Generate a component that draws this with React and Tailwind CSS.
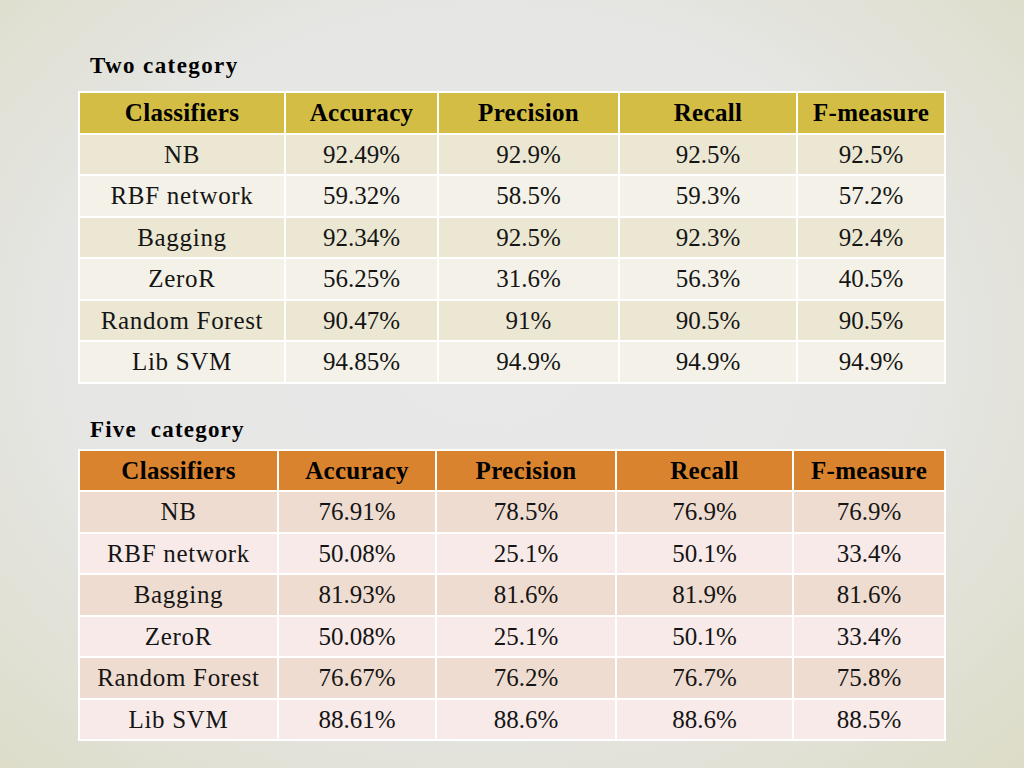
import React from "react";

const two = [
  ["NB", "92.49%", "92.9%", "92.5%", "92.5%"],
  ["RBF network", "59.32%", "58.5%", "59.3%", "57.2%"],
  ["Bagging", "92.34%", "92.5%", "92.3%", "92.4%"],
  ["ZeroR", "56.25%", "31.6%", "56.3%", "40.5%"],
  ["Random Forest", "90.47%", "91%", "90.5%", "90.5%"],
  ["Lib SVM", "94.85%", "94.9%", "94.9%", "94.9%"],
];

const five = [
  ["NB", "76.91%", "78.5%", "76.9%", "76.9%"],
  ["RBF network", "50.08%", "25.1%", "50.1%", "33.4%"],
  ["Bagging", "81.93%", "81.6%", "81.9%", "81.6%"],
  ["ZeroR", "50.08%", "25.1%", "50.1%", "33.4%"],
  ["Random Forest", "76.67%", "76.2%", "76.7%", "75.8%"],
  ["Lib SVM", "88.61%", "88.6%", "88.6%", "88.5%"],
];

const heads = ["Classifiers", "Accuracy", "Precision", "Recall", "F-measure"];

function Table({ rows, cols, headBg, oddBg, evenBg }) {
  return (
    <div className={`grid ${cols} gap-[2px] border-2 border-white bg-white w-[868px]`}>
      {heads.map((h) => (
        <div
          key={h}
          className={`${headBg} h-[39.5px] flex items-center justify-center font-bold text-[25px] tracking-[0.3px] text-black`}
        >
          {h}
        </div>
      ))}
      {rows.map((r, i) =>
        r.map((c, j) => (
          <div
            key={i + "-" + j}
            className={`${i % 2 === 0 ? oddBg : evenBg} h-[39.5px] flex items-center justify-center text-[25px] text-[#151515] ${j === 0 ? "tracking-[0.7px]" : ""}`}
          >
            {c}
          </div>
        ))
      )}
    </div>
  );
}

export default function App() {
  return (
    <div
      className="w-[1024px] h-[768px] overflow-hidden bg-[radial-gradient(ellipse_at_48%_45%,#e8e8e8_0%,#e6e6e5_55%,#dcdcc7_100%)] pl-[78px] pt-[50px]"
      style={{ fontFamily: '"Liberation Serif", "Times New Roman", serif' }}
    >
      <div className="pl-[12px] h-[32px] leading-[32px] font-bold text-[23px] tracking-[1.4px] text-black mb-[9px]">
        Two category
      </div>
      <Table
        rows={two}
        cols="grid-cols-[204px_151px_179px_176px_146px]"
        headBg="bg-[#d3bd45]"
        oddBg="bg-[#ebe7d3]"
        evenBg="bg-[#f4f2e8]"
      />
      <div className="pl-[12px] mt-[30px] h-[32px] leading-[32px] font-bold text-[23px] tracking-[1.2px] text-black mb-[3px] whitespace-pre">
        {"Five  category"}
      </div>
      <Table
        rows={five}
        cols="grid-cols-[197px_156px_178px_175px_150px]"
        headBg="bg-[#d9832f]"
        oddBg="bg-[#efdcd1]"
        evenBg="bg-[#f8eae8]"
      />
    </div>
  );
}
